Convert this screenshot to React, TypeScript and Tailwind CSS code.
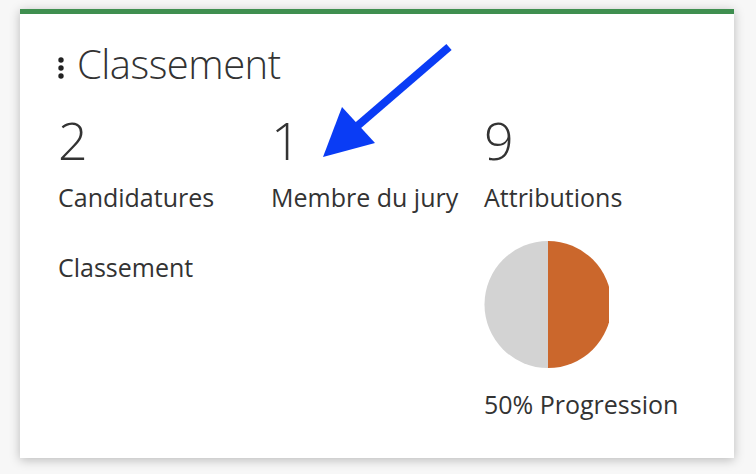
const App = () => {
  return (
    <div className="relative w-[756px] h-[474px] bg-[#f7f7f7] pt-[9px] pl-[20px] font-['Open_Sans',sans-serif] text-[#333]">
      <div className="w-[714px] h-[449px] bg-white border-t-[5px] border-[#3f8f50] shadow-[0_2px_10px_rgba(0,0,0,0.25)] pl-[38px] pt-[25px]">
        <div className="flex items-center h-[50px] -ml-[1px]">
          <svg width="8" height="22" viewBox="0 0 8 22" className="mr-[12px] mt-[8px]">
            <circle cx="4" cy="3" r="2.7" fill="#222" />
            <circle cx="4" cy="11" r="2.7" fill="#222" />
            <circle cx="4" cy="19" r="2.7" fill="#222" />
          </svg>
          <h1 className="text-[40px] font-light leading-[50px] tracking-[-0.5px]">Classement</h1>
        </div>
        <div className="grid grid-cols-[213px_213px_213px] mt-[21px]">
          <div>
            <p className="text-[52px] font-light leading-[60px]">2</p>
            <p className="text-[25px] mt-[12px] leading-[30px]">Candidatures</p>
            <p className="text-[25px] mt-[40px] leading-[30px]">Classement</p>
          </div>
          <div>
            <p className="text-[52px] font-light leading-[60px]">1</p>
            <p className="text-[25px] mt-[12px] leading-[30px]">Membre du jury</p>
          </div>
          <div>
            <p className="text-[52px] font-light leading-[60px]">9</p>
            <p className="text-[25px] mt-[12px] leading-[30px]">Attributions</p>
            <div className="mt-[29px] w-[125px] h-[127px] overflow-hidden">
              <svg width="128" height="127" viewBox="0 0 128 127">
                <path d="M64 0 A63.5 63.5 0 0 0 64 127 Z" fill="#d3d3d3" />
                <path d="M64 0 A63.5 63.5 0 0 1 64 127 Z" fill="#cb672c" />
              </svg>
            </div>
            <p className="text-[25px] mt-[21px] leading-[30px]">50% Progression</p>
          </div>
        </div>
      </div>
      <svg className="absolute left-0 top-0" width="756" height="474" viewBox="0 0 756 474">
        <line x1="449" y1="47" x2="355" y2="128" stroke="#0a3cf5" strokeWidth="8" strokeLinecap="butt" />
        <polygon points="323,157 342,107 375,143" fill="#0a3cf5" />
      </svg>
    </div>
  )
}
export default App
